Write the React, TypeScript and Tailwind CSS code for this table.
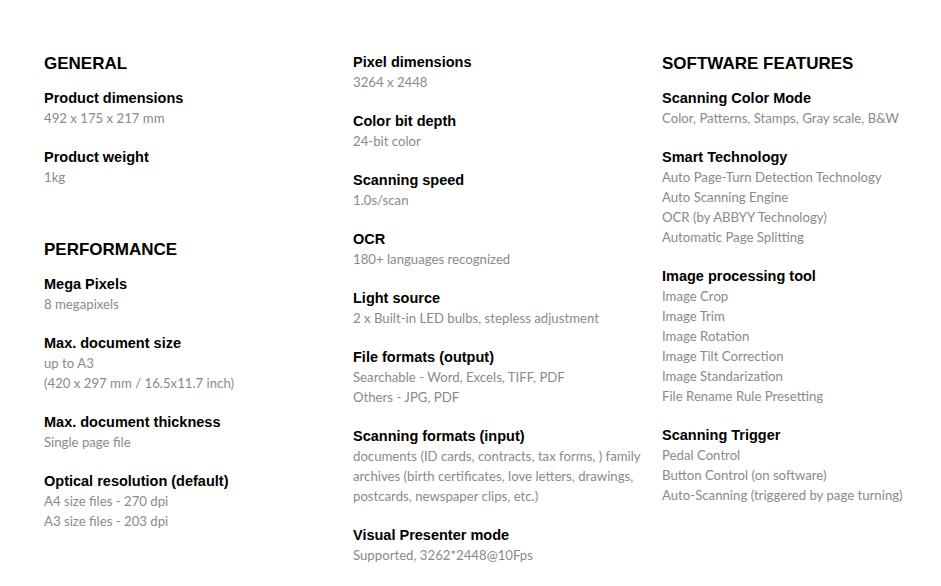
import React from 'react';

type Spec = { label: string; values: string[] };
type Section = { title?: string; items: Spec[] };

const columns: Section[][] = [
  [
    {
      title: 'GENERAL',
      items: [
        { label: 'Product dimensions', values: ['492 x 175 x 217 mm'] },
        { label: 'Product weight', values: ['1kg'] },
      ],
    },
    {
      title: 'PERFORMANCE',
      items: [
        { label: 'Mega Pixels', values: ['8 megapixels'] },
        { label: 'Max. document size', values: ['up to A3', '(420 x 297 mm / 16.5x11.7 inch)'] },
        { label: 'Max. document thickness', values: ['Single page file'] },
        { label: 'Optical resolution (default)', values: ['A4 size files - 270 dpi', 'A3 size files - 203 dpi'] },
      ],
    },
  ],
  [
    {
      items: [
        { label: 'Pixel dimensions', values: ['3264 x 2448'] },
        { label: 'Color bit depth', values: ['24-bit color'] },
        { label: 'Scanning speed', values: ['1.0s/scan'] },
        { label: 'OCR', values: ['180+ languages recognized'] },
        { label: 'Light source', values: ['2 x Built-in LED bulbs, stepless adjustment'] },
        { label: 'File formats (output)', values: ['Searchable - Word, Excels, TIFF, PDF', 'Others - JPG, PDF'] },
        {
          label: 'Scanning formats (input)',
          values: [
            'documents (ID cards, contracts, tax forms, ) family archives (birth certificates, love letters, drawings, postcards, newspaper clips, etc.)',
          ],
        },
        { label: 'Visual Presenter mode', values: ['Supported, 3262*2448@10Fps'] },
      ],
    },
  ],
  [
    {
      title: 'SOFTWARE FEATURES',
      items: [
        { label: 'Scanning Color Mode', values: ['Color, Patterns, Stamps, Gray scale, B&W'] },
        {
          label: 'Smart Technology',
          values: ['Auto Page-Turn Detection Technology', 'Auto Scanning Engine', 'OCR (by ABBYY Technology)', 'Automatic Page Splitting'],
        },
        {
          label: 'Image processing tool',
          values: ['Image Crop', 'Image Trim', 'Image Rotation', 'Image Tilt Correction', 'Image Standarization', 'File Rename Rule Presetting'],
        },
        {
          label: 'Scanning Trigger',
          values: ['Pedal Control', 'Button Control (on software)', 'Auto-Scanning (triggered by page turning)'],
        },
      ],
    },
  ],
];

export default function App() {
  return (
    <div className="min-h-[586px] bg-white pl-[44px] pt-[51px] font-['Liberation_Sans',Arial,sans-serif]">
      <div className="grid grid-cols-[309px_309px_270px]">
        {columns.map((sections, ci) => (
          <div key={ci} className={`flex flex-col ${ci === 1 ? 'pt-px' : ''}`}>
            {sections.map((section, si) => (
              <div key={si} className={si > 0 ? 'mt-[31px]' : ''}>
                {section.title && (
                  <h2 className="mb-[12px] pt-px text-[17px] font-bold leading-[24px] text-black">
                    {section.title}
                  </h2>
                )}
                {section.items.map((item) => (
                  <div key={item.label} className="mb-[19px]">
                    <h3 className="text-[14.5px] font-bold leading-[20px] text-black">{item.label}</h3>
                    {item.values.map((v) => (
                      <p key={v} className="font-['Lato',sans-serif] text-[13.2px] leading-[20px] text-[#8a8a8a]">
                        {v}
                      </p>
                    ))}
                  </div>
                ))}
              </div>
            ))}
          </div>
        ))}
      </div>
    </div>
  );
}
